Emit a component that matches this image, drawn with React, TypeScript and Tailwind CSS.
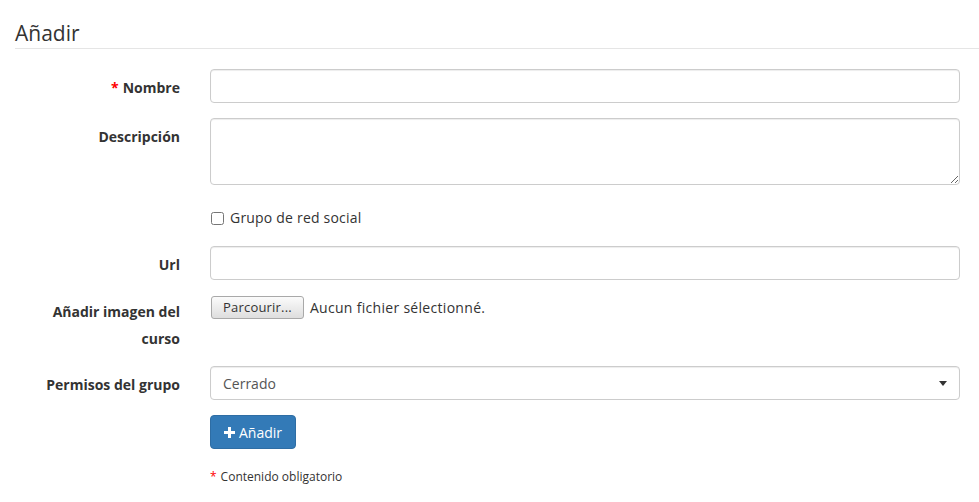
import { useState } from 'react'

const inputCls =
  'block w-full h-[34px] px-3 rounded-[4px] border border-[#cccccc] bg-white text-[14px] text-[#555555] shadow-[inset_0_1px_1px_rgba(0,0,0,0.075)] outline-none'

function Label({ children, required, className = '' }: { children: React.ReactNode; required?: boolean; className?: string }) {
  return (
    <div className={`w-[165px] shrink-0 text-right font-bold text-[14px] text-[#333333] ${className}`}>
      {required && <span className="text-[#ff0000] mr-1">*</span>}
      {children}
    </div>
  )
}

export default function App() {
  const [social, setSocial] = useState(false)

  return (
    <div
      className="min-h-screen bg-white pl-[15px] pt-[18px] text-[14px] text-[#333333]"
      style={{ fontFamily: '"Open Sans", "Noto Sans", sans-serif' }}
    >
      <div className="text-[21px] leading-[30px] border-b border-[#e5e5e5] mb-[20px]">Añadir</div>

      <form className="flex flex-col" onSubmit={(e) => e.preventDefault()}>
        <div className="flex mb-[15px]">
          <Label required className="pt-[9px] leading-5">Nombre</Label>
          <div className="ml-[30px] w-[750px]">
            <input type="text" className={inputCls} />
          </div>
        </div>

        <div className="flex mb-[15px]">
          <Label className="pt-[9px] leading-5">Descripción</Label>
          <div className="ml-[30px] w-[750px]">
            <textarea className="block w-full h-[67px] px-3 py-[6px] rounded-[4px] border border-[#cccccc] bg-white text-[14px] shadow-[inset_0_1px_1px_rgba(0,0,0,0.075)] outline-none" />
          </div>
        </div>

        <div className="flex mb-[15px] h-[31px]">
          <div className="w-[165px] shrink-0" />
          <label className="ml-[30px] flex items-center gap-[6px] h-5 mt-[8px] pl-[1px] text-[14px] leading-5 tracking-[0.2px] text-[#333333]">
            <input
              type="checkbox"
              checked={social}
              onChange={(e) => setSocial(e.target.checked)}
              className="w-[13px] h-[13px] m-0"
            />
            Grupo de red social
          </label>
        </div>

        <div className="flex mb-[15px]">
          <Label className="pt-[9px] leading-5">Url</Label>
          <div className="ml-[30px] w-[750px]">
            <input type="text" className={inputCls} />
          </div>
        </div>

        <div className="flex mb-[15px] h-[56px]">
          <Label className="pt-[3px] leading-[27px]">Añadir imagen del curso</Label>
          <div className="ml-[30px] w-[750px] flex items-start pt-[1px] pl-[1px]">
            <button
              type="button"
              className="h-[23px] px-[11px] rounded-[3px] border border-[#a9a9a9] bg-gradient-to-b from-[#fbfbfb] to-[#dedede] text-[13px] leading-[21px] tracking-[0.2px] text-[#333333]"
            >
              Parcourir...
            </button>
            <span className="ml-[6px] leading-[23px] text-[14px] tracking-[0.3px] text-[#333333]">Aucun fichier sélectionné.</span>
          </div>
        </div>

        <div className="flex mb-[15px]">
          <Label className="pt-[9px] leading-5">Permisos del grupo</Label>
          <div className="ml-[30px] w-[750px] relative">
            <select className={`${inputCls} appearance-none text-[#333333]`}>
              <option>Cerrado</option>
              <option>Abierto</option>
            </select>
            <svg className="absolute right-[13px] top-[15px] pointer-events-none" width="8" height="5" viewBox="0 0 8 5">
              <path d="M0 0h8L4 5z" fill="#333333" />
            </svg>
          </div>
        </div>

        <div className="flex">
          <div className="w-[165px] shrink-0" />
          <div className="ml-[30px]">
            <button
              type="submit"
              className="flex items-center h-[34px] pl-[13px] pr-[13px] rounded-[4px] border border-[#2e6da4] bg-[#337ab7] text-white text-[14px]"
            >
              <svg width="11" height="11" viewBox="0 0 11 11" className="mr-[4px]">
                <path d="M4 0h3v4h4v3H7v4H4V7H0V4h4z" fill="#ffffff" />
              </svg>
              Añadir
            </button>
            <div className="mt-[20px] text-[12px] leading-4 text-[#333333]">
              <span className="text-[#ff0000] mr-[4px]">*</span>
              Contenido obligatorio
            </div>
          </div>
        </div>
      </form>
    </div>
  )
}
